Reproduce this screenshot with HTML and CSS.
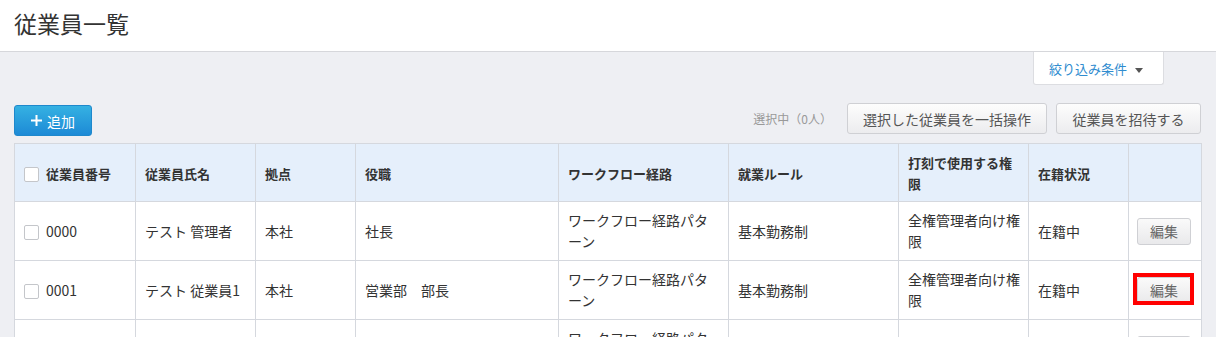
FILE: index.html
```html
<!DOCTYPE html>
<html lang="ja">
  <head>
    <meta charset="UTF-8" />
    <title>従業員一覧</title>
    <link rel="stylesheet" href="styles.css">
  </head>

  <body>
    <header class="page-head">
      <h1 class="title">従業員一覧</h1>
    </header>

    <main class="content">
      <div class="filter-row">
        <div class="filter-tab">絞り込み条件 <span class="caret"></span></div>
      </div>

      <div class="toolbar">
        <button class="btn-add">
          <svg width="11" height="11" viewBox="0 0 11 11"><path d="M5.5 0v11M0 5.5h11" stroke="#fff" stroke-width="2"/></svg>
          追加
        </button>
        <div class="toolbar-right">
          <span class="selected">選択中（0人）</span>
          <button class="btn">選択した従業員を一括操作</button>
          <button class="btn">従業員を招待する</button>
        </div>
      </div>

      <table class="list">
        <colgroup>
          <col style="width: 121px">
          <col style="width: 120px">
          <col style="width: 100px">
          <col style="width: 203px">
          <col style="width: 170px">
          <col style="width: 170px">
          <col style="width: 130px">
          <col style="width: 100px">
          <col style="width: 73px">
        </colgroup>
        <thead>
          <tr>
            <th><span class="check"></span>従業員番号</th>
            <th>従業員氏名</th>
            <th>拠点</th>
            <th>役職</th>
            <th>ワークフロー経路</th>
            <th>就業ルール</th>
            <th>打刻で使用する権限</th>
            <th>在籍状況</th>
            <th></th>
          </tr>
        </thead>
        <tbody>
          <tr>
            <td><span class="check"></span>0000</td>
            <td>テスト 管理者</td>
            <td>本社</td>
            <td>社長</td>
            <td>ワークフロー経路パターン</td>
            <td>基本勤務制</td>
            <td>全権管理者向け権限</td>
            <td>在籍中</td>
            <td class="edit-cell"><button class="btn-edit">編集</button></td>
          </tr>
          <tr>
            <td><span class="check"></span>0001</td>
            <td>テスト 従業員1</td>
            <td>本社</td>
            <td>営業部　部長</td>
            <td>ワークフロー経路パターン</td>
            <td>基本勤務制</td>
            <td>全権管理者向け権限</td>
            <td>在籍中</td>
            <td class="edit-cell"><button class="btn-edit marked">編集</button></td>
          </tr>
          <tr>
            <td></td>
            <td></td>
            <td></td>
            <td></td>
            <td>ワークフロー経路パターン</td>
            <td></td>
            <td></td>
            <td></td>
            <td class="edit-cell"><button class="btn-edit">編集</button></td>
          </tr>
        </tbody>
      </table>
    </main>
  </body>
</html>
```

FILE: styles.css
```css
* {
  padding: 0;
  margin: 0;
  box-sizing: border-box;
}

html,
body {
  background: #eeeff3;
  font-family: "Noto Sans CJK JP", sans-serif;
  color: #333;
  overflow: hidden;
}

.page-head {
  height: 52px;
  background: #fff;
  border-bottom: 1px solid #d6d7db;
  padding-left: 14px;
}

.title {
  font-size: 23px;
  font-weight: normal;
  line-height: 46px;
  color: #333;
}

.content {
  padding: 0 15px 0 14px;
}

.filter-row {
  display: flex;
  justify-content: flex-end;
  padding-right: 37px;
}

.filter-tab {
  width: 131px;
  height: 33px;
  background: #fff;
  border: 1px solid #dcdde1;
  border-top: none;
  border-radius: 0 0 3px 3px;
  font-size: 13px;
  line-height: 33px;
  color: #2f8ccf;
  padding-left: 15px;
}

.caret {
  display: inline-block;
  margin-left: 5px;
  vertical-align: middle;
  border-top: 5px solid #555;
  border-left: 4px solid transparent;
  border-right: 4px solid transparent;
}

.toolbar {
  display: flex;
  justify-content: space-between;
  align-items: flex-start;
  margin-top: 18px;
}

.btn-add {
  display: flex;
  align-items: center;
  justify-content: center;
  gap: 5px;
  margin-top: 2px;
  width: 78px;
  height: 31px;
  border: 1px solid #1e88cc;
  border-radius: 3px;
  background: linear-gradient(#35b1e2, #1d8ad6);
  color: #fff;
  font-family: inherit;
  font-size: 14px;
}

.toolbar-right {
  display: flex;
  align-items: center;
  gap: 9px;
}

.selected {
  font-size: 12px;
  color: #999;
  margin-right: 6px;
}

.btn {
  height: 31px;
  padding: 0 15px;
  border: 1px solid #cfd0d4;
  border-radius: 3px;
  background: linear-gradient(#fdfdfd, #ececee);
  color: #555;
  font-family: inherit;
  font-size: 14px;
}

.toolbar-right .btn:first-of-type {
  width: 200px;
}

.toolbar-right .btn:last-of-type {
  width: 145px;
}

.list {
  margin-top: 7px;
  width: 1187px;
  table-layout: fixed;
  border-collapse: collapse;
  background: #fff;
  font-size: 14px;
}

.list th,
.list td {
  border: 1px solid #d5d8de;
  padding: 8px 8px 8px 9px;
  line-height: 21px;
  text-align: left;
  vertical-align: middle;
}

.list th {
  padding-bottom: 7px;
  background: #e5effb;
  font-size: 13px;
  font-weight: bold;
}

.list tbody tr {
  height: 59px;
}

.check {
  display: inline-block;
  width: 15px;
  height: 15px;
  margin-right: 7px;
  vertical-align: -3px;
  background: #fff;
  border: 1px solid #c4c6ca;
  border-radius: 2px;
}

.list .edit-cell {
  padding-left: 8px;
}

.btn-edit {
  position: relative;
  width: 54px;
  height: 27px;
  border: 1px solid #cfd0d4;
  border-radius: 3px;
  background: linear-gradient(#fafafa, #e9e9eb);
  color: #666;
  font-family: inherit;
  font-size: 14px;
}

/* annotation box around the second edit button */
.btn-edit.marked::after {
  content: "";
  position: absolute;
  top: -5px;
  left: -5px;
  right: -4px;
  bottom: -2px;
  border: 4px solid #f00;
}
```
